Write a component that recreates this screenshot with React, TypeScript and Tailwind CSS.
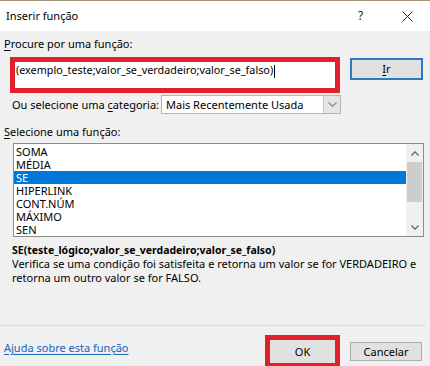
import type { ReactNode } from 'react';

const FUNCS = ['SOMA', 'MÉDIA', 'SE', 'HIPERLINK', 'CONT.NÚM', 'MÁXIMO', 'SEN'];

function Chevron({ up = false, color = '#606060', w = 9, h = 5 }: { up?: boolean; color?: string; w?: number; h?: number }) {
  return (
    <svg width={w} height={h} viewBox={`0 0 ${w} ${h}`} fill="none">
      <polyline
        points={up ? `0.5,${h - 0.5} ${w / 2},0.8 ${w - 0.5},${h - 0.5}` : `0.5,0.5 ${w / 2},${h - 0.8} ${w - 0.5},0.5`}
        stroke={color}
        strokeWidth="1.2"
      />
    </svg>
  );
}

function Key({ children }: { children: ReactNode }) {
  return <span className="underline underline-offset-[2px]">{children}</span>;
}

export default function App() {
  return (
    <div className="w-[430px] h-[366px] overflow-hidden bg-[#f0f0f0] text-black text-[11px] leading-[16px] font-['Noto_Sans',sans-serif] border-t border-[#a89478] whitespace-nowrap">
      {/* Title bar */}
      <div className="h-[30px] bg-white flex items-center pl-[6px]">
        <span className="flex-1">Inserir função</span>
        <span className="w-[10px] text-[#222] text-[12px]">?</span>
        <div className="ml-[34px] mr-[17px] flex items-center">
          <svg width="11" height="11" viewBox="0 0 11 11">
            <path d="M0.5 0.5 L10.5 10.5 M10.5 0.5 L0.5 10.5" stroke="#222" strokeWidth="1" />
          </svg>
        </div>
      </div>

      <div className="mt-[5px] pl-[4px]">
        <Key>P</Key>rocure por uma função:
      </div>

      {/* Search row */}
      <div className="mt-[5px] flex items-start">
        <div className="ml-[10px] w-[330px] h-[36px] border-[5px] border-[#e2202c] bg-white pl-[1px] pt-px leading-[13px]">
          <span className="text-[10.8px]">(exemplo_teste;valor_se_verdadeiro;valor_se_falso)</span>
          <span className="inline-block w-px h-[13px] bg-black align-middle ml-px" />
        </div>
        <button className="ml-[10px] mt-[1px] w-[73px] h-[22px] border-2 border-[#2a7bc4] bg-[#e1e1e1] flex items-center justify-center">
          <Key>I</Key>r
        </button>
      </div>

      {/* Category row */}
      <div className="mt-[2px] flex items-center h-[19px]">
        <span className="pl-[12px] w-[161px]">
          Ou selecione uma <Key>c</Key>ategoria:
        </span>
        <div className="w-[180px] h-[19px] border border-[#b4b4b4] bg-white flex items-center">
          <span className="flex-1 pl-[4px]">Mais Recentemente Usada</span>
          <div className="w-[17px] h-full bg-[#e6e6e6] border-l border-[#c8c8c8] flex items-center justify-center">
            <Chevron color="#8a8a8a" />
          </div>
        </div>
      </div>

      <div className="mt-[10px] pl-[4px]">
        <Key>S</Key>elecione uma função:
      </div>

      {/* Function list */}
      <div className="mt-[3px] ml-[13px] w-[411px] h-[94px] border border-[#8c8c8c] bg-white flex">
        <div className="w-[392px] pt-[1px]">
          {FUNCS.map(f => (
            <div
              key={f}
              className={`h-[13px] leading-[13px] pl-[2px] ${f === 'SE' ? 'bg-[#0078d7] text-white' : ''}`}
            >
              {f}
            </div>
          ))}
        </div>
        <div className="w-[17px] flex flex-col items-center bg-[#f0f0f0]">
          <div className="h-[18px] flex items-center justify-center">
            <Chevron up color="#606060" w={8} h={5} />
          </div>
          <div className="w-[15px] h-[40px] bg-[#cdcdcd]" />
          <div className="flex-1" />
          <div className="h-[18px] flex items-center justify-center">
            <Chevron color="#606060" w={8} h={5} />
          </div>
        </div>
      </div>

      {/* Description */}
      <div className="mt-[5px] pl-[12px] font-bold text-[10.5px]">SE(teste_lógico;valor_se_verdadeiro;valor_se_falso)</div>
      <div className="-mt-px pl-[12px] leading-[14px]">
        Verifica se uma condição foi satisfeita e retorna um valor se for VERDADEIRO e
      </div>
      <div className="pl-[12px] leading-[14px]">retorna um outro valor se for FALSO.</div>

      <div className="mt-[40px] w-[425px] h-px bg-[#dcdcdc]" />

      {/* Footer */}
      <div className="mt-[9px] flex items-start">
        <a className="ml-[4px] mt-[5px] text-[#1565b8] underline underline-offset-[2px]">Ajuda sobre esta função</a>
        <div className="ml-auto w-[75px] h-[33px] border-[5px] border-[#e2202c] bg-[#e1e1e1] flex items-center justify-center">
          OK
        </div>
        <button className="ml-[10px] mr-[8px] mt-[7px] w-[72px] h-[19px] border border-[#adadad] bg-[#e1e1e1] flex items-center justify-center">
          Cancelar
        </button>
      </div>
    </div>
  );
}
